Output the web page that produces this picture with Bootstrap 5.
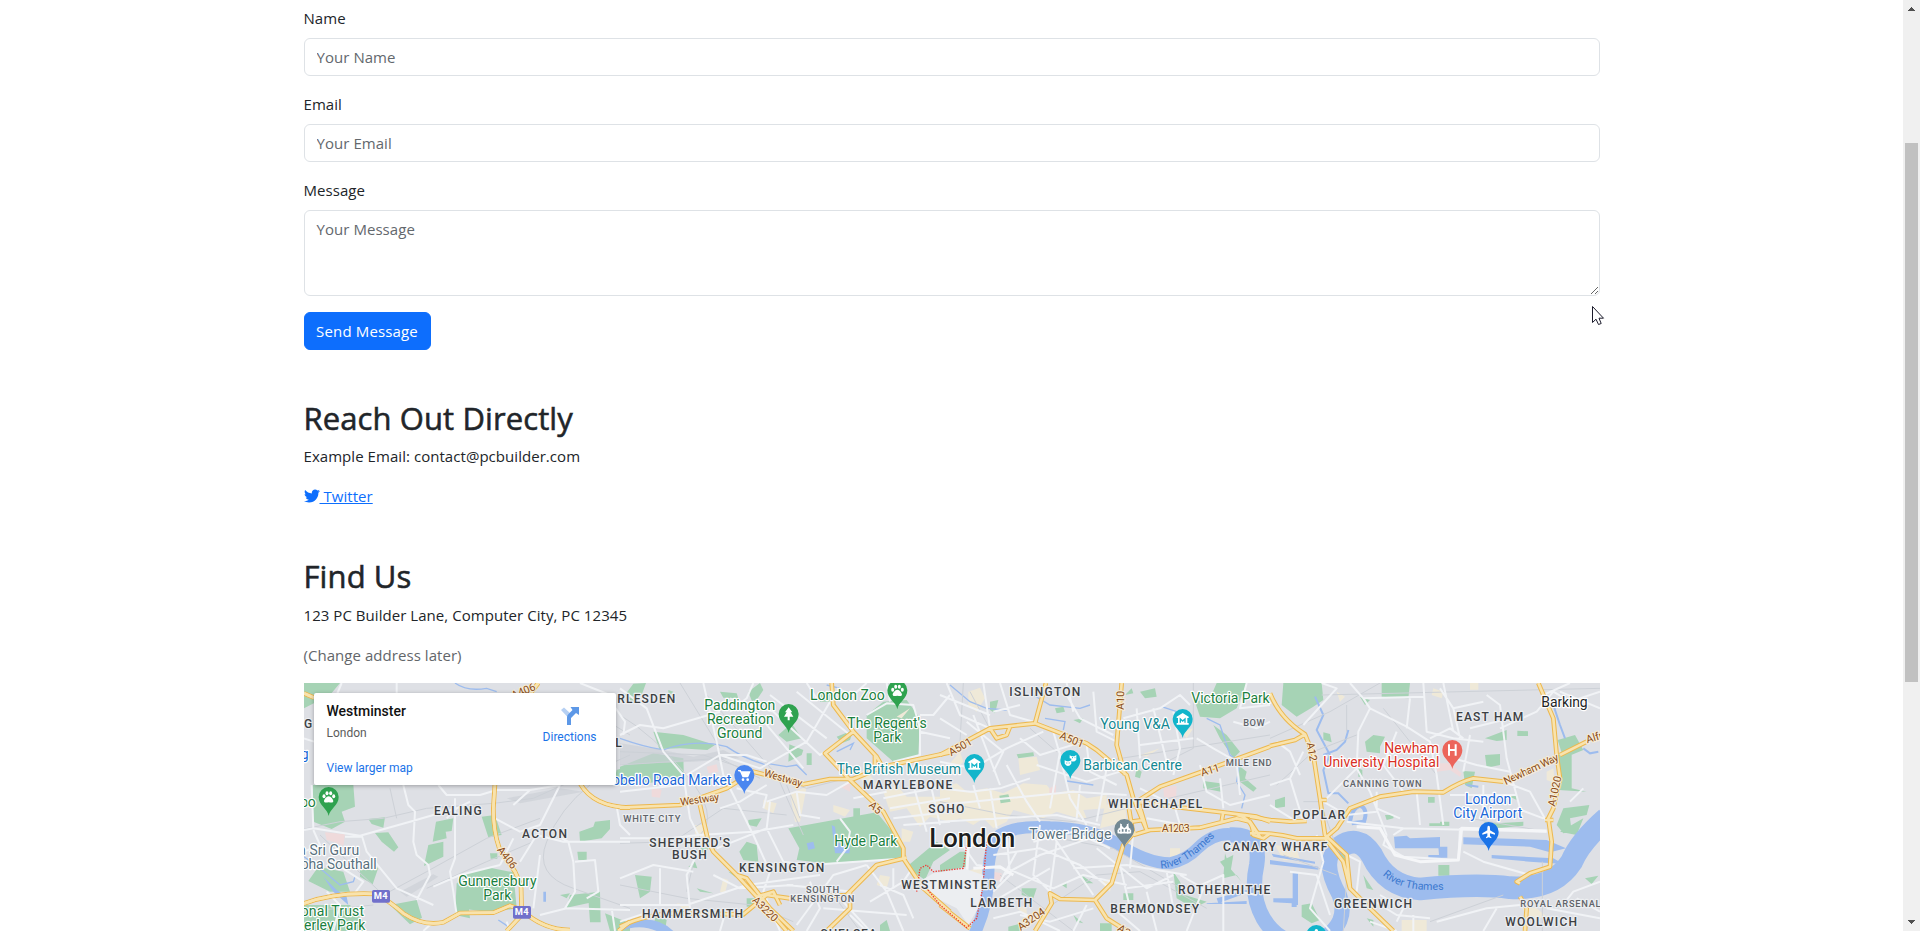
<!DOCTYPE html>
<html lang="en">
<head>
<meta charset="utf-8">
<meta name="viewport" content="width=device-width, initial-scale=1">
<title>Contact</title>
<link href="https://cdn.jsdelivr.net/npm/bootstrap@5.3.0/dist/css/bootstrap.min.css" rel="stylesheet">
<style>
html{overflow:hidden}
body{width:1903px;height:931px;overflow:hidden;padding-top:6px;font-family:"Open Sans","Noto Sans",sans-serif}
.form-label,.form-control,.btn,p{font-size:15px;line-height:24px;letter-spacing:.05px}
.form-control{font-size:15px;border-color:#dee2e6}
.form-control::placeholder{color:#63686d}
.form-label{display:block}
textarea.form-control{height:86px}
.btn-send{letter-spacing:.15px;width:127px;padding-left:0;padding-right:0}
h2{font-size:31px;line-height:38.4px;letter-spacing:.1px;position:relative;top:1px;-webkit-text-stroke:.55px currentColor}
.muted-note{color:#62666a}
.twitter-icon{width:16px;height:16px;vertical-align:-2px}
.map-box{height:248px;background:#dee0e5}
.map-art{display:block;width:1296px;height:248px}
.place-card{position:absolute;left:10px;top:10px;width:302px;height:92px;background:#fff;border-radius:2px;box-shadow:0 1px 4px rgba(0,0,0,.3);font-family:Roboto,sans-serif;font-size:12px;padding:9px 19px 0 13px}
.place-name{font-size:14px;font-weight:500;line-height:18px;color:#111}
.place-town{line-height:14px;margin-top:6px;color:#5b5b5b}
.place-more{line-height:14px;margin-top:21px}
.blue-text{color:#1a73e8}
.dir-link{padding-top:5px;line-height:14px}
.dir-icon{margin-bottom:5px}
.page-scroll{position:fixed;right:0;top:0;width:17px;height:931px;background:#f0f0f0}
.page-scroll .thumb{position:absolute;left:2px;top:143px;width:13px;height:539px;background:#c1c1c1}
.page-scroll svg{position:absolute;left:5px}
.pointer{position:fixed;left:1592px;top:306px}
.map-art text{font-family:Roboto,sans-serif;paint-order:stroke;stroke:#fff;stroke-width:7px;stroke-linejoin:round;font-size:42px}
.park{fill:#a6d3b5}.wat{fill:#9dbcee}.beige{fill:#efe9d8}.pink{fill:#efdadb}
.creek{fill:none;stroke:#9dbcee;stroke-width:4}
.rail{fill:none;stroke:#cdd1d7;stroke-width:3}
.minor{fill:none;stroke:#f1f3f6;stroke-width:6;stroke-linejoin:round}
.street{fill:none;stroke:#f5f6f8;stroke-width:9;stroke-linejoin:round}
.casing{fill:none;stroke:#edb84e;stroke-width:14;stroke-linejoin:round}
.hwy{fill:none;stroke:#f8e3ae;stroke-width:8;stroke-linejoin:round}
.map-art .area{font-weight:500;font-size:36px;fill:#3c4043;stroke:#eceef1}
.map-art .sub{font-weight:500;font-size:28px;fill:#5f6368;stroke:#eceef1}
.map-art .grn{fill:#1a8040}.map-art .teal{fill:#138792}.map-art .slate{fill:#59717e}
.map-art .red{fill:#d93025}.map-art .blu{fill:#1a67d8}
.map-art .road{fill:#8a4b16;font-size:32px;stroke:#f6ecd6}
.map-art .river{fill:#3b78cf;font-size:32px;stroke:none}
.map-art .shield{fill:#fff;stroke:none;font-weight:700;font-size:28px}
</style>
</head>
<body>
<main class="container">
  <form>
    <div class="mb-3"><label class="form-label" for="name">Name</label><input id="name" class="form-control" placeholder="Your Name"></div>
    <div class="mb-3"><label class="form-label" for="email">Email</label><input id="email" class="form-control" placeholder="Your Email"></div>
    <div class="mb-3"><label class="form-label" for="message">Message</label><textarea id="message" class="form-control" placeholder="Your Message"></textarea></div>
    <button type="button" class="btn btn-primary btn-send d-block">Send Message</button>
  </form>
  <section class="mt-5">
    <h2>Reach Out Directly</h2>
    <p>Example Email: contact@pcbuilder.com</p>
    <p class="mb-0"><a href="#"><svg class="twitter-icon" viewBox="0 0 512 512" fill="currentColor"><path d="M459.37 151.716c.325 4.548.325 9.097.325 13.645 0 138.72-105.583 298.558-298.558 298.558-59.452 0-114.68-17.219-161.137-47.106 8.447.974 16.568 1.299 25.34 1.299 49.055 0 94.213-16.568 130.274-44.832-46.132-.975-84.792-31.188-98.112-72.772 6.498.974 12.995 1.624 19.818 1.624 9.421 0 18.843-1.3 27.614-3.573-48.081-9.747-84.143-51.98-84.143-102.985v-1.299c13.969 7.797 30.214 12.67 47.431 13.319-28.264-18.843-46.781-51.005-46.781-87.391 0-19.492 5.197-37.36 14.294-52.954 51.655 63.675 129.3 105.258 216.365 109.807-1.624-7.797-2.599-15.918-2.599-24.04 0-57.828 46.782-104.934 104.934-104.934 30.213 0 57.502 12.67 76.67 33.137 23.715-4.548 46.456-13.32 66.599-25.34-7.798 24.366-24.366 44.833-46.132 57.827 21.117-2.273 41.584-8.122 60.426-16.243-14.292 20.791-32.161 39.308-52.628 54.253z"/></svg> Twitter</a></p>
  </section>
  <section class="mt-5">
    <h2>Find Us</h2>
    <p>123 PC Builder Lane, Computer City, PC 12345</p>
    <p class="muted-note">(Change address later)</p>
    <div class="map-box position-relative">
      <svg class="map-art" viewBox="12 24 3888 744">
        <defs>
          <path id="pin" d="M0,57C-4,34-30,26-30,0A30,30 0 1 1 30,0C30,26 4,34 0,57z"/>
          <g id="paw" fill="#fff"><ellipse cx="-14" cy="-2" rx="4.500" ry="6"/><ellipse cx="-5" cy="-11" rx="4.500" ry="6"/><ellipse cx="6" cy="-11" rx="4.500" ry="6"/><ellipse cx="15" cy="-2" rx="4.500" ry="6"/><path d="M0-2C7-2 14 8 14 13C13 19 6 16 0 16S-13 19-14 13C-14 8-7-2 0-2z"/></g>
          <g id="museum"><path fill="#fff" d="M0-18L18-7V-3H-18V-7zM-14-3h28V12h4v5H-18V12h4z"/><path d="M-7 11V0L0 6 7 0V11" fill="none" stroke="#12b5cb" stroke-width="4"/></g>
          <path id="thames-a" d="M662,580Q745,578 850,455"/>
          <path id="thames-b" d="M338,600Q400,660 560,640"/>
        </defs>

        <!-- parks, hospitals and shopping streets -->
        <g>
          <path class="park" d="M12,24H120L90,60 12,100zM38,330H160L165,395 125,410 135,440 95,462 40,440zM205,432L255,427 250,458 215,447zM225,474L265,472 295,517 282,530 245,500zM408,440L460,430 455,468 437,470 440,490 398,500zM385,510L430,500 430,545 372,573zM545,425L585,420 605,480 565,487zM838,470L880,455 885,440 930,435 930,462 905,490 840,500zM950,285L990,272V330H940zM55,575L130,590 150,650 90,650 25,618zM180,575L235,578 218,628 180,605zM12,690H150L190,740V768H12zM270,690L350,675 366,728 330,748zM500,595L570,578 640,592 650,700 570,712 480,700zM780,660L810,655 800,670zM810,660L900,650 902,742 870,742 866,684 800,698zM915,715L990,745V768H930zM570,535h22v16h-20zM832,530h28v25h-25zM470,625L495,610 510,730 465,720z"/>
          <path class="pink" d="M75,472L135,478 130,512 105,502 80,495z"/>
          <g transform="translate(960)"><path class="park" d="M40,26L78,24 65,60 40,85 15,60zM145,45L160,50 145,66zM100,170L190,180 285,210 262,225 180,220 118,222zM0,275L100,235 190,250 192,310 80,325 0,290zM300,50L350,55 355,70 310,68zM385,50L420,24 430,45 400,90zM475,180L515,145 545,190 500,200zM508,208L550,225 545,240 505,260zM650,185L700,165 690,195 665,205zM740,120L790,80 860,75 900,130 895,240 820,260 740,190zM600,50h30v30h-30zM385,435L425,430 410,455 385,450zM505,460L770,412 850,510 850,550 620,565 530,555 538,520zM358,530L380,500 410,510 415,560 370,555zM235,520L270,515 240,550zM205,575L225,560 232,580zM45,600L95,605 90,650 60,670zM230,640L280,655 240,650zM110,715L140,735 135,768 100,750zM860,575L950,500 990,525 940,560 915,615 880,590zM325,590L370,600 365,620zM560,235h15v35h-15zM700,400h20v40h-20zM380,670h25v25h-25zM780,750l20-15 10 33h-30z"/><path class="beige" d="M225,450L250,450 260,520 225,500zM430,375L470,385 460,415 430,400zM510,355L560,335 540,440 525,440zM790,350L830,330 860,365 990,365 990,440 930,425 900,455 860,400 810,410zM845,460L880,470 870,500 845,500zM780,600L810,605 800,640 770,630zM845,130L870,100 830,125zM560,630L570,625 565,665zM700,295L740,285 770,330 730,320zM170,685L210,690 200,710zM310,610l15,5-10,40-15-5zM640,390l50,15-15,20-35-15z"/><path class="pink" d="M260,275L290,268 295,290 265,295zM95,335L125,345 120,368 95,365zM660,335L690,322 690,350z"/></g>
          <g transform="translate(1920)"><path class="beige" d="M85,50L120,38 135,70 110,110 85,90zM0,340L50,325 80,350 140,340 190,355 250,325 320,330 340,355 400,345 440,370 500,360 500,400 430,405 440,430 400,425 350,410 310,430 220,405 200,440 160,460 130,430 100,450 60,430 30,440 0,420zM30,265L60,230 70,260 30,300zM235,250L290,245 300,285 240,300zM495,390L555,380 560,440 480,460zM600,240L660,220 620,245zM725,170L760,160 740,190zM390,460L460,470 420,500zM560,500L580,510 570,530zM80,590L130,570 125,620zM230,700L260,690 260,720zM690,520h30v25h-30zM480,620l40-10-10,40z"/><path class="park" d="M150,80L175,75 165,115 150,105zM345,100L370,95 375,110 350,115zM400,135L430,130 420,145zM230,238L280,232 282,243 235,250zM178,362L205,358 212,380 182,385zM590,280L605,290 600,310 585,305zM765,80L810,70 830,24 920,24 890,100 840,130 780,125zM820,150L860,180 900,230 880,250 840,190zM790,318L840,325 842,350 790,340zM895,270L920,290 915,310 950,340 940,350 900,320zM600,50L645,40 650,65 615,70zM555,60l20-20 5,15zM550,655h30v20h-30zM245,640L290,640 280,670 245,660zM365,630L380,620 380,640zM420,598L460,625 440,625zM0,570L60,530 85,530 78,575 0,590zM855,535L870,580 905,620 890,600 850,610zM840,560L880,540 870,600zM700,590L720,620 735,660 800,680 760,700 710,670zM400,720L430,745 410,740zM480,745h35v23h-35zM205,755l40-10v23h-40z"/><path class="pink" d="M670,338L710,332 708,375 672,365zM328,340l20-10v25h-20zM385,245l30,10-5,20zM160,590l25,5v25l-25-5z"/></g>
          <g transform="translate(2910)"><path class="park" d="M40,24H155L160,75 130,95 80,125 35,90zM335,24L420,24 415,70 335,65zM270,65l30,10-15,15zM160,172l20,5 5,25-25-8zM285,200L310,180 345,185 330,215 330,235 290,230zM645,190L710,165 710,195 680,198zM742,167l32,2v14h-32zM645,240L690,237 690,270 650,278zM580,288L615,290 605,340 585,330zM15,375L45,365 45,395 15,400zM345,420L372,420 370,430 350,435zM478,445h60v8h-60zM474,366h20v17h-20zM510,440h28v10h-28zM505,570h33v32h-33zM640,440l40,5 80-5v12l-80,8zM863,195L915,180 940,225 880,250zM865,240L905,220 905,340 950,350 865,345zM880,400L958,390 950,420 900,430 905,470 880,475 860,450zM870,470L940,430 920,480zM95,690L125,685 150,735 125,745 95,725zM280,600L310,645 290,640zM200,525l30,15-5,20zM945,610l40-8-20,25zM290,730l20,5v20zM720,365l20-5v15zM265,280l12,5v20h-12z"/><path class="beige" d="M830,290L850,280 855,325 830,315zM15,510L80,520 90,555 40,555zM395,735h75v33h-75zM490,40l30,10-5,20-30-10zM200,50l25,15-15,15zM750,690l50,10 30,25-50,10zM600,24h25v20h-25z"/><path class="pink" d="M500,265l40,0 35,30-5,10-30-20-40,5z"/></g>
        </g>

        <!-- water -->
        <g class="wat">
          <path d="M70,605L110,645 140,665 145,690 100,650zM730,650h8v30h-8z"/>
          <path transform="translate(960)" d="M560,505l20-5 5,20-20,5zM635,450L645,455 650,500 690,520 688,535 645,535zM0,750Q100,710 160,768H110Q60,745 0,768z"/>
          <path transform="translate(1920)" d="M830,670L920,645 925,652 835,685zM800,685L920,678V687H800z"/>
          <path transform="translate(2910)" d="M372,485L410,482 420,490 510,486V520H375zM505,515H532V548H475V540H507zM580,487L830,495 888,520 840,532 780,515 580,508zM665,540L850,550 880,567 780,560 665,550zM0,555L145,575V584L0,568zM5,536L135,560V566L10,545zM68,595H84V690H68zM10,670H80V696H65V685L10,682z"/>
        </g>
        <g fill="none" stroke="#9dbcee">
          <path transform="translate(1920)" stroke-width="36" d="M100,785Q145,690 145,600Q145,520 180,480Q230,450 330,457Q450,460 530,505Q620,565 690,565Q740,555 775,518Q835,460 905,485"/>
          <path transform="translate(2910)" stroke-width="46" d="M-120,480Q-25,475-40,570Q-60,660-20,730Q40,830 150,795Q240,745 208,660Q150,555 205,515Q260,475 300,520"/>
          <path transform="translate(2910)" stroke-width="68" d="M205,520Q265,475 305,540Q350,635 450,642Q620,625 720,638Q850,645 905,560Q930,500 1010,430"/>
        </g>
        <g class="creek">
          <path d="M465,24Q500,50 560,40L590,50M12,545L60,580 120,630 160,620 165,605M595,735L625,755"/>
          <path transform="translate(960)" d="M0,190Q70,215 130,225 220,190 320,215 370,250 440,270M440,265L500,275 530,270 560,300M650,230L700,205 690,225M620,30l40,10"/>
          <path transform="translate(1920)" d="M30,30L90,80 140,100 200,105M280,60L330,90 420,100 450,90M315,130L375,140 370,165M665,95L710,110M800,130L840,150 870,240 900,260 890,320 915,360 905,400M380,318L460,330"/>
          <path transform="translate(2910)" stroke-width="6" d="M135,65L160,120 140,165 180,240 160,285 175,355 205,355 235,385M160,240L200,225 225,200 235,165M850,90L870,150 885,190M940,220L960,235 985,230M590,330l35,5"/>
          <path transform="translate(2910)" stroke-width="12" d="M240,440Q245,400 270,392 295,400 282,440L245,445"/>
        </g>

        <!-- railways -->
        <g class="rail">
          <path d="M12,462L120,440 250,430 380,400 580,385 700,370 990,240M60,480L250,660 380,590 560,490 720,430M270,340L290,430M870,330Q780,400 740,500T820,640L990,700M380,640L560,560 700,500M12,710L220,690M860,100L990,180"/>
          <path transform="translate(960)" d="M0,120Q100,180 200,300T240,480 L200,650M0,230L250,240 400,290 560,340 720,300M0,270L300,250 420,310M0,505L160,500 310,400 500,420M260,60L470,300 550,480M180,24L300,220M0,630L200,670 400,690 520,740M500,330L540,430M640,660L720,768"/>
          <path transform="translate(1920)" d="M70,24L60,200M90,50L170,200M0,380L200,420 400,440 600,390 990,300M320,700L470,600 600,590 800,700M300,480L520,520 740,650M480,260L990,180M270,160L350,230M180,600L400,768M760,24V220L640,280"/>
          <path transform="translate(2910)" d="M0,190L180,110 330,24M230,90V170M155,60L990,40M20,330L130,230 260,180M100,380H150L230,600 220,768M817,560V768M480,740L700,660M900,680L990,700M40,540L200,600M340,100L500,300M600,430L830,470"/>
        </g>
        <path fill="#cbd0d5" opacity=".65" d="M960,205L1090,225 1180,245 1270,225 1320,250 1180,260 1060,265 960,270zM620,370L780,340 850,350 660,385zM300,650L400,598 415,605 320,665z"/>

        <!-- local streets -->
        <g class="minor">
          <path d="M125,24L110,60M290,24V60M12,190L42,200M12,465L40,460 35,330M40,460L180,482 330,440 470,400 510,380M310,330L325,390 345,410 340,500 350,540 385,570 390,600 350,675M415,330L440,360 540,360 590,345 690,345 780,330M465,370V550L450,590 460,650 470,720M185,480L200,530 290,640 400,690M135,485L185,485M585,430L660,470 720,450 780,330M660,560L710,480 790,500 990,500M400,635L480,600 600,570M785,490L805,500 820,560 825,650 795,700 990,705M825,560L885,555 895,650 860,670M720,720L800,700M935,700L945,768M950,395L960,450 990,480M840,24L930,60M940,90L975,140 970,180M370,768L400,740M620,740L630,768M470,400L440,430M690,345L640,390M12,530L60,510 40,465M120,575L190,620 160,660M80,650L120,690 100,768M640,490L600,570M720,540L700,700"/>
          <g transform="translate(960)"><path d="M0,40L80,100 130,230 190,300 210,430 235,480M0,180L60,150 130,160 300,110M250,24L290,200 310,300 400,480 450,590M200,300L300,240 420,280 560,200 630,80M330,70L460,110 600,240 700,170M390,90L550,280M450,60L620,190M530,50L690,180M560,24L590,70M400,24L380,70 330,110M0,350L180,330M300,240L380,240 440,260M350,340L440,360 430,400M300,400L360,380 440,330M450,380L440,460 490,560 570,570M440,380L530,350 620,360 690,320M530,350L540,420 600,430M0,490L150,490 235,480 400,470 520,450M290,520L440,460M660,430L690,470 680,520 650,560M570,570L860,550M240,520L200,600 210,700M0,690L200,690 380,630 600,600M120,580V690M280,600L360,640 520,630M450,590L430,650 480,768M500,630L700,650M530,750L640,600 740,570M570,620L600,700 560,768M740,570L800,650 850,768M750,680L850,620 870,590M780,630L850,660 880,730M0,610L100,570 220,590M320,700L300,768M690,720L740,768M800,24L810,80M740,24L700,60 650,40M900,120H940L990,60M900,170L990,190M740,120L800,85 880,90 900,160V240L820,260"/><path d="M790,370L990,330M810,400L990,370M820,430L990,410M850,450L990,440M880,330L920,470M930,320L960,450M700,370L800,350M610,700L860,720M660,670L750,768M820,580V640M0,740L90,710"/></g>
          <g transform="translate(1920)"><path d="M0,60L150,120M20,24L60,120 150,160M130,24L150,160M80,140L190,230 160,290M180,24L210,120 280,140M240,90L160,110M0,130L80,180M0,260L100,280 200,220 310,170M100,120L180,330M0,340L90,350 180,340 270,310M0,390L200,370 400,350 560,360M200,270L260,380 300,440M240,190L300,240 430,200M290,270L350,290 440,320 540,290M340,170L360,240 390,370 440,450M440,210L450,290 530,330M380,60L420,130 520,180M380,24L400,110M460,50L470,170 530,200M550,130L660,100 720,60 750,90M590,100L600,250M600,210L760,190M640,100L680,260M700,110L720,220 700,300M770,190L820,220 890,260 900,360M880,140L950,160 990,140M780,270L800,350 870,390 990,360M840,310L850,400M920,24L900,100 990,90M600,340L700,390 840,410M700,380L720,450M620,430L780,460M300,450L280,600 340,660M200,480L210,600 160,650M160,540L300,520 420,570 510,640M280,500L400,470 510,520M330,470L460,660M190,600L300,540 450,490M200,580L340,640 430,600 560,630M350,500L330,650M230,530L180,620M160,680L330,580M400,580L560,570 740,600M470,520L620,640 700,600M540,570L570,700M520,700L600,768M560,640L700,620M620,650L650,768M580,470L570,580M720,600L790,640 740,768M680,590L700,700M760,640L850,600 850,768M160,730L240,710 360,768M440,690L400,768M240,720L330,740 460,700M0,440L180,430 350,420 480,450M100,330L120,400M150,340L170,460M420,330L410,430M500,280L470,440M360,230L330,400M60,500L110,570 190,580M900,650L950,660"/></g>
          <g transform="translate(2910)"><path d="M155,24L200,40 100,150M240,24L280,70 460,65M280,70L300,100 265,170 260,280 300,350 350,480M300,100L410,155 480,200 500,300 520,450M420,70L410,160M460,24L470,170 550,190 640,200M520,24L550,170M600,160L720,130M510,40L550,100 570,190M550,250L620,270 720,290M650,60L690,90 710,250 750,400M550,100L640,80M480,190L540,160 580,190M690,160L800,110 850,50M820,60L900,24M850,50L900,80 990,50M20,200L60,230 90,300M0,330L60,310 100,230M0,390L80,440M60,310L100,440M160,380L230,420 320,410M440,350L450,450M320,350V400L390,430M230,440L400,460 830,470 M400,460L370,480M570,460L565,555M740,400L820,430M350,480L340,510 400,545 565,555M580,530L640,560 780,600M60,590L140,600 180,720M140,480L160,560 120,700 180,768M230,540L270,560 260,650M300,670L380,720 480,730M430,768V720M300,740L380,768M500,740L650,700 750,690M830,700L990,730M640,768L680,700M330,660L400,700 380,740M870,700L910,650 990,620M260,280L160,380M380,170L340,270 400,350M600,180L580,290M700,320L780,350 830,440M640,330L640,430M900,380L940,340M870,50L990,100M540,360H740M920,670L990,710"/></g>
        </g>
        <path class="wat" transform="translate(1920)" d="M128,570h34v30h-34z"/>
        <g class="street"><path transform="translate(1920)" d="M80,600L85,510 110,510M100,580L180,575 220,600M40,640L120,650"/><path transform="translate(2910)" d="M260,455L330,460 375,540 450,560 565,555 575,460 830,468"/></g>
        <path fill="#eceef1" d="M1850,625L1900,595 1990,580 2050,600 2040,690 2005,750 1970,700 1870,650z"/>

        <!-- A roads and motorways -->
        <g class="casing">
          <path id="ra" d="M12,55L42,68M715,24L680,70M585,325L580,400Q580,470 598,520L645,590 663,630 665,712M0,690Q100,650 230,657 270,680 310,715 370,755 430,742L480,714 580,713 630,692 665,705Q730,765 810,765M665,720L620,768M840,325Q880,395 990,398M955,768L990,740"/>
          <path id="rb" transform="translate(960)" d="M0,398L180,390 320,340 400,290 550,328 630,312H700L790,275 1000,230M635,24L640,90 700,170 770,245 790,280M700,170L615,235 690,315 790,410 850,520V550L910,640 990,710M765,240V270M240,390L265,500 280,530 350,600 410,665 500,768M350,600L380,610 450,700 520,768M0,755Q80,715 180,715L370,718 440,660 510,670 680,660 770,570 860,548M410,665L460,650 480,690M690,650V700L620,768"/>
          <path id="rc" transform="translate(1920)" d="M318,24L285,145 150,160 0,240M150,160L170,190 200,180 210,155M285,145L440,205 470,225 560,300 580,370 620,465M545,24L530,210 555,300M990,215L800,285 660,335 590,380M580,480L630,465 780,458 890,430 930,440 960,485M590,380L700,395 830,410 950,425 990,440M850,410L845,440M890,420Q940,430 940,480L970,490 990,475M565,390L580,480M595,380L620,465M575,440L610,435M585,470L550,510 515,625 465,675 360,672 330,655 335,685 285,768M465,675L500,730 560,768M0,690L90,760"/>
          <path id="rd" transform="translate(2910)" d="M0,55Q30,130 105,178L130,240 150,370 165,480 230,540 240,640 300,700 370,768M105,178L75,195 0,213M-60,425L0,435 60,440 110,438M150,375H170M-60,475Q0,470 80,490L165,490 200,460 240,400 330,365 430,350 520,352Q570,320 610,310L700,320M165,490L220,560 240,640M805,24L850,130 860,240 870,310 850,400 835,430 845,500 840,575 780,595 740,620 750,625M870,240L950,200M825,435H850M750,665L770,700 765,768"/>
        </g>
        <g class="hwy"><use href="#ra"/></g>
        <g id="inner-roads" class="hwy"></g>
        <path fill="none" stroke="#ee3a33" stroke-width="4" stroke-dasharray="4 4" d="M1850,650L1860,580 1880,570 1900,590 1990,580 2000,510M2060,500L2048,640 2030,730 2000,758 1920,690 1880,640H1850"/>

        <!-- place names -->
        <g>
          <text class="area" x="12" y="159">G</text>
          <text class="blu" x="2" y="253">g</text>
          <text class="area" x="402" y="420" textLength="143">EALING</text>
          <text class="area" x="666" y="489" textLength="135">ACTON</text>
          <text class="grn" x="1" y="396" textLength="46">oo</text>
          <text class="slate" x="-5" y="540" textLength="183">a Sri Guru</text>
          <text class="slate" x="2" y="582" textLength="228">oha Southall</text>
          <text class="grn" x="2" y="723" textLength="190">onal Trust</text>
          <text class="grn" x="12" y="765" textLength="184">erley Park</text>
          <text class="grn" x="475" y="633" textLength="235">Gunnersbury</text>
          <text class="grn" x="550" y="675" textLength="84">Park</text>
          <text class="road" transform="translate(590,525) rotate(52)">A406</text>
          <text class="road" transform="translate(640,73) rotate(-23)">A406</text>
          <text class="area" x="946" y="216">L</text>
          <g><rect x="216" y="645" width="54" height="38" rx="5" fill="#7170cb"/><rect x="639" y="693" width="54" height="38" rx="5" fill="#7170cb"/><text class="shield" x="221" y="673" textLength="42">M4</text><text class="shield" x="644" y="721" textLength="42">M4</text></g>
        </g>
        <g transform="translate(960)">
          <text class="area" x="-8" y="83" textLength="174">RLESDEN</text>
          <text class="grn" x="253" y="105" textLength="213">Paddington</text><text class="grn" x="261" y="147" textLength="200">Recreation</text><text class="grn" x="291" y="190" textLength="136">Ground</text>
          <text class="grn" x="570" y="75" textLength="224">London Zoo</text>
          <text class="grn" x="682" y="158" textLength="238">The Regent's</text><text class="grn" x="760" y="201" textLength="84">Park</text>
          <text class="blu" x="-24" y="331" textLength="358">obello Road Market</text>
          <text class="road" transform="translate(430,303) rotate(16)" textLength="118">Westway</text>
          <text class="road" transform="translate(182,392) rotate(-8)" textLength="118">Westway</text>
          <text class="sub" x="10" y="442" textLength="171">WHITE CITY</text>
          <text class="area" x="88" y="515" textLength="242">SHEPHERD'S</text><text class="area" x="156" y="552" textLength="104">BUSH</text>
          <text class="area" x="357" y="591" textLength="256">KENSINGTON</text>
          <text class="sub" x="558" y="655" textLength="99">SOUTH</text><text class="sub" x="511" y="682" textLength="192">KENSINGTON</text>
          <text class="area" x="66" y="729" textLength="303">HAMMERSMITH</text>
          <text class="grn" x="643" y="513" textLength="189">Hyde Park</text>
          <text class="road" transform="translate(745,393) rotate(42)">A5</text>
          <text class="road" transform="translate(395,678) rotate(44)">A3220</text>
          <text class="area" x="600" y="789" textLength="170">CHELSEA</text>
          <text class="area" x="729" y="342" textLength="268">MARYLEBONE</text>
          <text class="teal" x="650" y="297" textLength="373">The British Museum</text>
          <text class="area" x="925" y="414" textLength="108">SOHO</text>
          <text class="area" x="844" y="642" textLength="285">WESTMINSTER</text>
          <text x="928" y="517" font-weight="500" fill="#1d1e20" style="font-size:76px" textLength="258" lengthAdjust="spacingAndGlyphs">London</text>
        </g>
        <g transform="translate(1920)">
          <text class="area" x="208" y="63" textLength="213">ISLINGTON</text>
          <text class="teal" x="481" y="162" textLength="209">Young V&amp;A</text>
          <text class="teal" x="430" y="284" textLength="296">Barbican Centre</text>
          <text class="grn" x="754" y="84" textLength="235">Victoria Park</text>
          <text class="sub" x="910" y="153" textLength="64">BOW</text><text class="sub" x="857" y="273" textLength="138">MILE END</text>
          <text class="area" x="504" y="399" textLength="283">WHITECHAPEL</text>
          <text class="slate" x="268" y="491" textLength="246">Tower Bridge</text>
          <text class="area" x="91" y="696" textLength="186">LAMBETH</text>
          <text class="area" x="511" y="714" textLength="266">BERMONDSEY</text>
          <text class="area" x="714" y="657" textLength="277">ROTHERHITHE</text>
          <text class="area" x="849" y="528" textLength="313">CANARY WHARF</text>
          <text class="road" transform="translate(34,244) rotate(-30)">A501</text>
          <text class="road" transform="translate(357,190) rotate(22)">A501</text>
          <text class="road" transform="translate(551,105) rotate(-88)">A10</text>
          <text class="road" transform="translate(786,304) rotate(-17)">A11</text>
          <text class="road" x="665" y="471" textLength="84">A1203</text>
          <text class="road" transform="translate(242,768) rotate(-35)">A3204</text>
          <text class="road" transform="translate(530,765) rotate(33)">A2</text>
          <text class="river"><textPath href="#thames-a">River Thames</textPath></text>
        </g>
        <g transform="translate(2910)">
          <text class="area" x="558" y="138" textLength="202">EAST HAM</text>
          <text x="814" y="97" fill="#222426" textLength="139">Barking</text>
          <text class="red" x="343" y="234" textLength="164">Newham</text><text class="red" x="160" y="276" textLength="348">University Hospital</text>
          <text class="sub" x="219" y="336" textLength="236">CANNING TOWN</text>
          <text class="area" x="69" y="432" textLength="156">POPLAR</text>
          <text class="blu" x="585" y="387" textLength="139">London</text><text class="blu" x="550" y="429" textLength="207">City Airport</text>
          <text class="area" x="192" y="699" textLength="234">GREENWICH</text>
          <text class="sub" x="751" y="697" textLength="241">ROYAL ARSENAL</text>
          <text class="area" x="706" y="753" textLength="215">WOOLWICH</text>
          <text class="road" transform="translate(110,204) rotate(80)">A12</text>
          <text class="road" transform="translate(707,330) rotate(-25)" textLength="178">Newham Way</text>
          <text class="road" transform="translate(855,396) rotate(-78)">A1020</text>
          <text class="road" transform="translate(952,205) rotate(-17)">Alfr</text>
          <text class="river"><textPath href="#thames-b">River Thames</textPath></text>
        </g>

        <!-- markers -->
        <g transform="translate(86,366)"><use href="#pin" fill="#2fa24f"/><use href="#paw"/></g>
        <g transform="translate(1792,46)"><use href="#pin" fill="#2fa24f"/><use href="#paw"/></g>
        <g transform="translate(1466,117)"><use href="#pin" fill="#2fa24f"/><path fill="#fff" d="M0-20L11-5H6L14 8H3V19H-3V8H-14L-6-5H-11z"/></g>
        <g transform="translate(1333,300)"><use href="#pin" fill="#4a86f0"/><path d="M-19-13H-12L-4 5H10L16-9H-10" fill="#fff" stroke="#fff" stroke-width="4"/><circle cx="-4" cy="14" r="4" fill="#fff"/><circle cx="10" cy="14" r="4" fill="#fff"/></g>
        <g transform="translate(2023,267)"><use href="#pin" fill="#12b5cb"/><use href="#museum"/></g>
        <g transform="translate(2648,132)"><use href="#pin" fill="#12b5cb"/><use href="#museum"/></g>
        <g transform="translate(2311,255)"><use href="#pin" fill="#12b5cb"/><path fill="#fff" d="M-2-14L4-11H12L18-15V-1Q11 8 3 3V-4L-2-5zM-17 1L-10 4H-4L3 1V11Q-7 25-17 11z"/><path d="M-12 9h3m4 0h3M5-7h3m5 0h2" stroke="#12b5cb" stroke-width="3"/></g>
        <g transform="translate(2473,462)"><use href="#pin" fill="#728893"/><path fill="none" stroke="#fff" stroke-width="5" d="M-18 11H18M-10-15V14M10-15V14M-18 2Q-10 0-10-9Q0 8 10-9Q10 0 18 2M-18 2V13M18 2V13M0 2V12"/></g>
        <g transform="translate(3457,225)"><use href="#pin" fill="#ec655b"/><path fill="none" stroke="#fff" stroke-width="6" d="M-10-17V17M10-17V17M-10 0H10"/></g>
        <g transform="translate(3566,471)"><use href="#pin" fill="#1a73e8"/><path fill="#fff" d="M0-19Q4-19 4-12V-5L19 4V8L4 4V12L8 16V19L0 16-8 19V16L-4 12V4L-19 8V4L-4-5V-12Q-4-19 0-19z"/></g>
        <g transform="translate(3049,780)"><use href="#pin" fill="#12b5cb"/><circle cy="-13" r="5" fill="#fff"/></g>
      </svg>
      <div class="place-card d-flex justify-content-between">
        <div><div class="place-name">Westminster</div><div class="place-town">London</div><div class="place-more blue-text">View larger map</div></div>
        <div class="dir-link text-center blue-text"><svg class="d-block mx-auto dir-icon" width="20" height="18" viewBox="0 0 20 18"><path d="M1 3L4 .5 11 7 8.500 11z" fill="#b6d0f3"/><path d="M7 18V10Q7 8 9 6.500L12.500 3 10.500 0H19V8L16 6 11 11V18z" fill="#5d98e7"/></svg>Directions</div>
      </div>
    </div>
  </section>
</main>
<div class="page-scroll"><svg width="7" height="4" style="top:7px"><path d="M3 0h1v1h1v1h1v1h1v1H0V3h1V2h1V1h1z" fill="#505050"/></svg><div class="thumb"></div><svg width="7" height="4" style="top:920px"><path d="M0 0h7v1H6v1H5v1H4v1H3V3H2V2H1V1H0z" fill="#505050"/></svg></div>
<svg class="pointer" width="13" height="20" viewBox="0 0 13 20"><path d="M.5.5V16.500L4 13.200 6.500 18.500 9.200 17.500 7 12.200H11.500z" fill="#fff" stroke="#1b1b2b"/></svg>
<script src="https://cdn.jsdelivr.net/npm/bootstrap@5.3.0/dist/js/bootstrap.bundle.min.js"></script>
<script>
// Lay the light road surface over the darker casing.
['ra','rb','rc','rd'].forEach(function(id){
  var road=document.getElementById(id).cloneNode(true);
  road.removeAttribute('id');
  document.getElementById('inner-roads').appendChild(road);
});
</script>
</body>
</html>
